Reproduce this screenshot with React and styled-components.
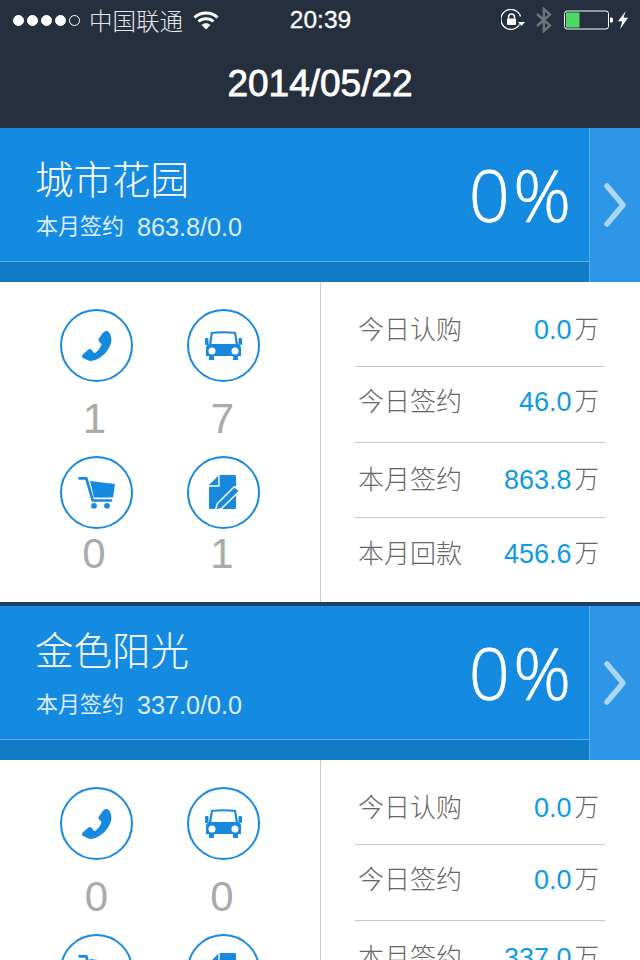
import React from "react";
import styled, { createGlobalStyle } from "styled-components";

const cjk = `"Liberation Sans", "Noto Sans CJK SC", sans-serif`;

const GlobalStyle = createGlobalStyle`
	html, body {
		margin: 0;
		padding: 0;
		height: 960px;
		overflow: hidden;
		background: #fff;
		font-family: ${cjk};
	}
`;

const Page = styled.div`
	width: 640px;
	height: 960px;
	overflow: hidden;
`;

const TopBar = styled.header`
	background-color: #262f3e;
	height: 128px;
	color: #fff;
`;

const StatusBar = styled.div`
	height: 40px;
	display: grid;
	grid-template-columns: 1fr auto 1fr;
	align-items: center;
	padding: 0 12px 0 13px;
	box-sizing: border-box;
`;

const StatusLeft = styled.div`
	display: flex;
	align-items: center;
`;

const StatusRight = styled.div`
	display: flex;
	align-items: center;
	justify-content: flex-end;
`;

const Dot = styled.span`
	width: 11px;
	height: 11px;
	border-radius: 50%;
	box-sizing: border-box;
	margin-right: 3px;
	background: ${(p) => (p.$empty ? "transparent" : "#fff")};
	border: 1px solid #fff;
`;

const Carrier = styled.span`
	font-size: 23.5px;
	font-weight: 300;
	color: #e4e6e8;
	margin: 0 10px 0 6px;
`;

const Time = styled.span`
	font-size: 24.5px;
	font-weight: 500;
	-webkit-text-stroke: 0.3px #fff;
`;

const NavTitle = styled.h1`
	margin: 0;
	height: 88px;
	line-height: 88px;
	text-align: center;
	font-size: 37px;
	font-weight: 400;
	-webkit-text-stroke: 0.8px #fff;
`;

const Summary = styled.section`
	height: 154px;
	display: grid;
	grid-template-columns: 1fr 51px;
	background-color: #158ae1;
`;

const SummaryMain = styled.div`
	display: flex;
	flex-direction: column;
`;

const SummaryInfo = styled.div`
	height: 134px;
	box-sizing: border-box;
	border-bottom: 1px solid #5aaeea;
	display: flex;
	justify-content: space-between;
	padding: 0 15px 0 36px;
	color: #fff;
`;

const SummaryFoot = styled.div`
	flex: 1;
	background-color: #137cc6;
`;

const Name = styled.div`
	font-size: 38.5px;
	line-height: 50px;
	font-weight: 300;
	margin-left: -1px;
	padding-top: ${(p) => p.$top}px;
`;

const Signed = styled.div`
	font-size: 22px;
	line-height: 30px;
	margin-top: ${(p) => p.$gap}px;
	color: #dcedfa;
	display: flex;
	align-items: center;
	gap: 13px;
`;

const SignedValue = styled.span`
	font-size: 25.2px;
`;

const Percent = styled.div`
	font-family: "Open Sans", sans-serif;
	font-weight: 300;
	font-size: 72px;
	line-height: 132px;
	letter-spacing: 3px;
	-webkit-text-stroke: 0.6px #fff;
`;

const Arrow = styled.div`
	background-color: #2d96e6;
	border-left: 1px solid #5aaeea;
	display: flex;
	align-items: center;
	justify-content: center;
`;

const Detail = styled.section`
	height: 320px;
	display: grid;
	grid-template-columns: 321px 1fr;
	background: #fff;
`;

const Actions = styled.div`
	border-right: 1px solid #ccc;
	display: grid;
	grid-template-columns: repeat(2, 127px);
	grid-auto-rows: min-content;
	padding: 27px 0 0 33px;
`;

const Action = styled.div`
	height: ${(p) => p.$height}px;
	display: flex;
	flex-direction: column;
	align-items: center;
`;

const Circle = styled.div`
	width: 73px;
	height: 73px;
	flex: none;
	box-sizing: border-box;
	border: 2px solid #178ae0;
	border-radius: 50%;
	display: flex;
	align-items: center;
	justify-content: center;
`;

const Count = styled.div`
	font-size: 42px;
	line-height: 50px;
	color: #aaa;
	margin-top: ${(p) => p.$gap}px;
	margin-right: ${(p) => p.$shift}px;
`;

const Figures = styled.div`
	padding: 0 35px 0 34px;
`;

const Figure = styled.div`
	height: ${(p) => p.$height}px;
	box-sizing: border-box;
	padding: ${(p) => p.$top}px 6px 0 3px;
	display: flex;
	justify-content: space-between;
	border-bottom: ${(p) => (p.$last ? "none" : "1px solid #c8c8c8")};
`;

const FigureLabel = styled.span`
	font-size: 26px;
	line-height: 36px;
	color: #666;
	font-weight: 300;
`;

const FigureValue = styled.span`
	display: flex;
	align-items: center;
	height: 36px;
	gap: 3px;
`;

const Amount = styled.span`
	font-size: 27px;
	color: #0f9ae2;
`;

const Unit = styled.span`
	font-size: 24.5px;
	line-height: 1;
	color: #666;
	font-weight: 300;
`;

const Separator = styled.div`
	height: 4px;
	background-color: #1f3f68;
`;

const Wifi = () => (
	<svg width="26" height="20" viewBox="0 0 26 20" fill="none" stroke="#fff" strokeWidth="3">
		<path d="M1.500 7.500C7.800 1.500 18.200 1.500 24.500 7.500" />
		<path d="M5.500 11.500C9.600 7.700 16.400 7.700 20.500 11.500" />
		<path d="M13 19.500L8.600 15C11 12.800 15 12.800 17.400 15Z" fill="#fff" stroke="none" />
	</svg>
);

const RotationLock = () => (
	<svg width="24" height="22" viewBox="0 0 24 22" fill="none" style={{ marginRight: 10 }}>
		<path d="M18.500 15.500A10 10 0 1 1 19.500 7.500" stroke="#fff" strokeWidth="1.300" />
		<path d="M17 13H24L20.500 17Z" fill="#fff" />
		<path d="M7.500 9.500V8a3 3 0 0 1 6 0v1.500" stroke="#fff" strokeWidth="1.500" />
		<rect x="6" y="9.500" width="9" height="6.500" rx="0.700" fill="#fff" />
	</svg>
);

const Bluetooth = () => (
	<svg width="18" height="26" viewBox="0 0 18 26" fill="none" stroke="#6f747c" strokeWidth="2.400" style={{ marginRight: 11 }}>
		<path d="M2 7L15 18.500L8.800 24V2L15 7.500L2 19" />
	</svg>
);

const Battery = () => (
	<svg width="50" height="20" viewBox="0 0 50 20" fill="none" style={{ marginRight: 4 }}>
		<rect x="0.500" y="1" width="44" height="18" rx="2.500" stroke="#fff" />
		<rect x="2" y="2.500" width="13.500" height="15" fill="#4cd964" />
		<path d="M46 7.500h1.500a1.500 1.500 0 0 1 1.500 1.500v2a1.500 1.500 0 0 1-1.500 1.500H46Z" fill="#fff" />
	</svg>
);

const Bolt = () => (
	<svg width="10" height="20" viewBox="0 0 11 20">
		<path d="M8.500 0L0 11.500H4.500L2.500 20L11 7.500H6Z" fill="#fff" />
	</svg>
);

const Chevron = () => (
	<svg width="24" height="46" viewBox="0 0 24 46" fill="none" stroke="#acd6f5" strokeWidth="5.500" strokeLinecap="round" strokeLinejoin="round">
		<path d="M4 4L20 23L4 42" />
	</svg>
);

const PhoneIcon = () => (
	<svg width="30" height="30" viewBox="0 0 30 30" fill="#178ae0">
		<path d="M23.500 .3C25 -.3 26.300 .3 27.300 1.800C29.600 5 30 9.500 28.500 13.500C26.300 19.800 20.800 25.800 14 28.800C11 30 8.500 30.200 6.500 29.600L1.500 27.300C-.2 26.300 -.4 24.800 .8 23.600L5.800 19C7.300 17.800 8.800 17.800 9.800 19L11.500 21.300C12.300 22.100 13 22 13.800 21.400C16.300 19.500 18 17.300 19.300 14.300C19.700 13.300 19.400 12.600 18.600 12L17.300 10.800C16.300 9.800 16.300 8.500 17 7.300L21 1.800C21.800 1 22.500 .6 23.500 .3Z" />
	</svg>
);

const CarIcon = () => (
	<svg width="37" height="29" viewBox="0 0 37 29" fill="#178ae0">
		<path fillRule="evenodd" d="M6 1C14 0 23 0 31 1L33 13C35 14 36 15 36 17V25H33V29H28V25H9V29H4V25H1V17C1 15 2 14 4 13ZM7.800 2.800L6.300 13H30.700L29.200 2.800C22 2 15 2 7.800 2.800ZM7 16.500A3.500 3.500 0 1 0 7 23.500A3.500 3.500 0 1 0 7 16.500ZM30 16.500A3.500 3.500 0 1 0 30 23.500A3.500 3.500 0 1 0 30 16.500Z" />
		<rect x="0" y="7" width="3.500" height="7" rx="1" />
		<rect x="33.500" y="7" width="3.500" height="7" rx="1" />
	</svg>
);

const CartIcon = () => (
	<svg width="38" height="32" viewBox="0 0 38 32" fill="#178ae0">
		<path d="M1.500 1.300H8.300L14.800 23.500H33" fill="none" stroke="#178ae0" strokeWidth="2.700" strokeLinecap="round" strokeLinejoin="round" />
		<path d="M12 4L37 7L35 20.500H16Z" />
		<circle cx="16" cy="28.800" r="2.900" />
		<circle cx="29" cy="28.800" r="2.900" />
	</svg>
);

const NoteIcon = () => (
	<svg width="30" height="35" viewBox="0 0 30 35" fill="#178ae0">
		<path d="M10 0H25.500a1.500 1.500 0 0 1 1.500 1.500V32.500a1.500 1.500 0 0 1-1.500 1.500H1.500A1.500 1.500 0 0 1 0 32.500V10Z" />
		<path d="M10 0V11H0" fill="none" stroke="#fff" strokeWidth="1.400" />
		<path d="M25.500 12.500L29.500 16L12 33L7.500 34.200L9 29Z" stroke="#fff" strokeWidth="3" strokeLinejoin="round" paintOrder="stroke" />
	</svg>
);

const projects = [
	{
		name: "城市花园",
		signed: "863.8/0.0",
		nameTop: 28,
		signedGap: 6,
		counts: ["1", "7", "0", "1"],
		countShifts: [4, 2, 5, 3],
		rows: [
			{ label: "今日认购", value: "0.0", height: 85, top: 30 },
			{ label: "今日签约", value: "46.0", height: 76, top: 17 },
			{ label: "本月签约", value: "863.8", height: 75, top: 19 },
			{ label: "本月回款", value: "456.6", height: 84, top: 18, last: true },
		],
	},
	{
		name: "金色阳光",
		signed: "337.0/0.0",
		nameTop: 21,
		signedGap: 13,
		counts: ["0", "0", "", ""],
		countShifts: [0, 3, 0, 0],
		rows: [
			{ label: "今日认购", value: "0.0", height: 85, top: 30 },
			{ label: "今日签约", value: "0.0", height: 76, top: 17 },
			{ label: "本月签约", value: "337.0", height: 75, top: 19 },
		],
	},
];

const icons = [PhoneIcon, CarIcon, CartIcon, NoteIcon];

const Project = ({ project }) => (
	<>
		<Summary>
			<SummaryMain>
				<SummaryInfo>
					<div>
						<Name $top={project.nameTop}>{project.name}</Name>
						<Signed $gap={project.signedGap}>
							本月签约
							<SignedValue>{project.signed}</SignedValue>
						</Signed>
					</div>
					<Percent>0%</Percent>
				</SummaryInfo>
				<SummaryFoot />
			</SummaryMain>
			<Arrow>
				<Chevron />
			</Arrow>
		</Summary>
		<Detail>
			<Actions>
				{icons.map((Icon, i) => (
					<Action key={i} $height={i < 2 ? 147 : 120}>
						<Circle>
							<Icon />
						</Circle>
						<Count $gap={i < 2 ? 12 : 0} $shift={project.countShifts[i]}>
							{project.counts[i]}
						</Count>
					</Action>
				))}
			</Actions>
			<Figures>
				{project.rows.map((row) => (
					<Figure key={row.label} $height={row.height} $top={row.top} $last={row.last}>
						<FigureLabel>{row.label}</FigureLabel>
						<FigureValue>
							<Amount>{row.value}</Amount>
							<Unit>万</Unit>
						</FigureValue>
					</Figure>
				))}
			</Figures>
		</Detail>
	</>
);

const App = () => (
	<Page>
		<GlobalStyle />
		<TopBar>
			<StatusBar>
				<StatusLeft>
					<Dot />
					<Dot />
					<Dot />
					<Dot />
					<Dot $empty />
					<Carrier>中国联通</Carrier>
					<Wifi />
				</StatusLeft>
				<Time>20:39</Time>
				<StatusRight>
					<RotationLock />
					<Bluetooth />
					<Battery />
					<Bolt />
				</StatusRight>
			</StatusBar>
			<NavTitle>2014/05/22</NavTitle>
		</TopBar>
		<Project project={projects[0]} />
		<Separator />
		<Project project={projects[1]} />
	</Page>
);

export default App;
